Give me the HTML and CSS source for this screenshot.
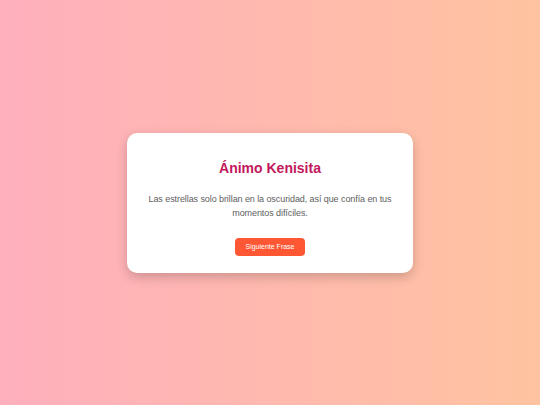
FILE: index.html
```html
<!DOCTYPE html>
<html>
    <head>
        <meta charset="utf-8" />
        <title>Ánimo Kenisita</title>
        <meta name="viewport" content="width=device-width, initial-scale=1">
        <link rel="stylesheet" href="styles.css">
    </head>
    <body class="flex-center">
        <section class="card">
            <h1 class="card-title">Ánimo Kenisita</h1>
            <p id="phrase" class="card-text">Las estrellas solo brillan en la oscuridad, así que confía en tus momentos difíciles.</p>
            <button id="button-next" class="button-next">Siguiente Frase</button>
        </section>
    </body>
</html>
```
FILE: styles.css
```css
html, body {
    height: 100%;
}

body {
    margin: 0;
    background: linear-gradient(to right, #ffafbd, #ffc3a0);
    font-family: "Liberation Sans", Arial, sans-serif;
}

.flex-center {
    display: flex;
    justify-content: center;
    align-items: center;
}

.card {
    width: 286px;
    box-sizing: border-box;
    padding: 19px 18px 17px;
    background-color: white;
    border-radius: 10px;
    box-shadow: 0 4px 12px rgba(0, 0, 0, 0.2);
    text-align: center;
}

.card-title {
    margin: 8px 0 0;
    font-size: 14px;
    line-height: 16px;
    color: #c2185b;
}

.card-text {
    margin: 16px 0 18px;
    font-size: 9px;
    letter-spacing: -0.08px;
    line-height: 14px;
    color: #606060;
}

.button-next {
    height: 18px;
    padding: 0 10px;
    border: none;
    border-radius: 4px;
    background-color: #ff5733;
    color: white;
    font-family: inherit;
    font-size: 7px;
    vertical-align: top;
    cursor: pointer;
}
```
